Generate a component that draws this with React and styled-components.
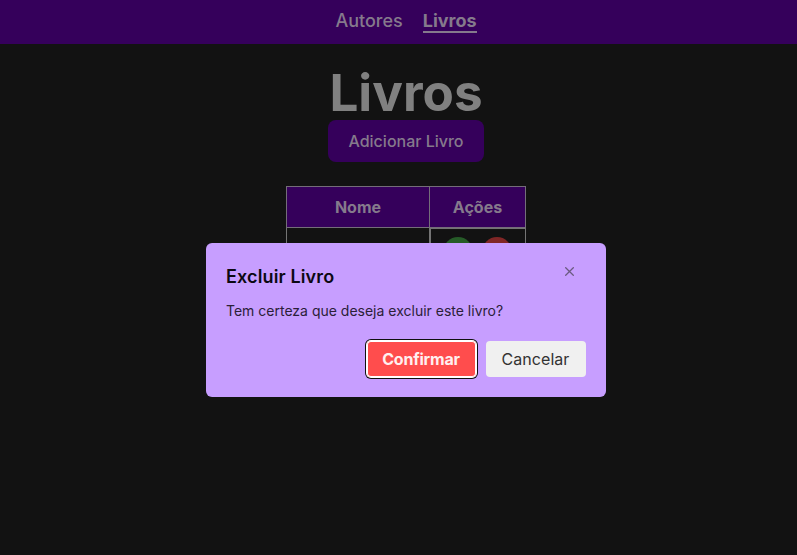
import React from 'react';
import styled, { createGlobalStyle } from 'styled-components';

const GlobalStyle = createGlobalStyle`
  *, *::before, *::after { box-sizing: border-box; }
  body {
    margin: 0;
    overflow: hidden;
    background: #121212;
    font-family: Inter, 'Liberation Sans', sans-serif;
  }
  button { font-family: inherit; border: 0; padding: 0; }
`;

const Page = styled.div`
  width: 812px;
  height: 555px;
  overflow: hidden;
  color: #808080;
`;

const NavBar = styled.nav`
  display: flex;
  justify-content: center;
  gap: 20px;
  height: 44px;
  padding-top: 9px;
  background: #35005b;
`;

const NavLink = styled.a`
  height: 24px;
  font-size: 18px;
  line-height: 24px;
  font-weight: ${({ $active }) => ($active ? 700 : 500)};
  color: #857a8c;
  border-bottom: ${({ $active }) => ($active ? '2px solid #857a8c' : '0')};
`;

const Content = styled.main`
  display: flex;
  flex-direction: column;
  align-items: center;
  padding-top: 26px;
`;

const Title = styled.h1`
  margin: 0;
  height: 50px;
  font-size: 51.2px;
  line-height: 44px;
  font-weight: 700;
`;

const AddButton = styled.button`
  width: 156px;
  height: 42px;
  border-radius: 8px;
  background: #35005b;
  color: #857a8c;
  font-size: 16px;
  font-weight: 500;
`;

const Table = styled.div`
  display: grid;
  grid-template-columns: 143px 97px;
  grid-template-rows: 42px 48px;
  width: 240px;
  margin-top: 24px;
`;

const HeadCell = styled.div`
  display: flex;
  align-items: center;
  justify-content: center;
  border: 1px solid #746d79;
  border-right-width: ${({ $last }) => ($last ? '1px' : '0')};
  background: #35005b;
  color: #857a8c;
  font-size: 16px;
  font-weight: 700;
`;

const BodyCell = styled.div`
  border: 1px solid #747474;
  border-top: 0;
  border-right: 0;
`;

const ActionsCell = styled.div`
  display: flex;
  justify-content: center;
  gap: 9px;
  padding: 8px 1px 0 0;
  border: 1px solid #747474;
  border-width: 1px 1px 1px 2px;
`;

const RoundButton = styled.button`
  width: 30px;
  height: 30px;
  border-radius: 50%;
  background: ${({ $color }) => $color};
`;

const Dialog = styled.section`
  position: absolute;
  left: 206px;
  top: 243px;
  display: flex;
  flex-direction: column;
  width: 400px;
  height: 154px;
  padding: 20px;
  border-radius: 6px;
  background: #c79eff;
  color: #0c0812;
`;

const DialogHeader = styled.header`
  display: flex;
  justify-content: space-between;
  height: 34px;
`;

const DialogTitle = styled.h2`
  margin: 0;
  font-size: 18px;
  line-height: 28px;
  font-weight: 600;
  letter-spacing: 0.13px;
`;

const CloseButton = styled.button`
  display: flex;
  margin: 4px 12px 0 0;
  width: 9px;
  height: 9px;
  background: transparent;
`;

const Message = styled.p`
  margin: 2px 0 0;
  height: 42px;
  font-size: 14px;
  line-height: 24px;
  color: #2b2038;
`;

const Actions = styled.footer`
  display: flex;
  justify-content: flex-end;
  gap: 10px;
`;

const ActionButton = styled.button`
  height: 36px;
  width: ${({ $danger }) => ($danger ? '109px' : '100px')};
  border-radius: 4px;
  padding-right: 1px;
  font-size: 16px;
  letter-spacing: ${({ $danger }) => ($danger ? '-0.2px' : '0.05px')};
  font-weight: ${({ $danger }) => ($danger ? 700 : 400)};
  color: ${({ $danger }) => ($danger ? '#fff0f0' : '#333333')};
  background: ${({ $danger }) => ($danger ? '#ff4d4d' : '#f0f0f0')};
  box-shadow: ${({ $danger }) =>
    $danger
      ? 'inset 0 0 0 1px #ffffff, 0 0 0 1px #ffffff, 0 0 0 2px #101010'
      : 'none'};
`;

export default function App() {
  return (
    <Page>
      <GlobalStyle />
      <NavBar>
        <NavLink>Autores</NavLink>
        <NavLink $active>Livros</NavLink>
      </NavBar>
      <Content>
        <Title>Livros</Title>
        <AddButton>Adicionar Livro</AddButton>
        <Table>
          <HeadCell>Nome</HeadCell>
          <HeadCell $last>Ações</HeadCell>
          <BodyCell />
          <ActionsCell>
            <RoundButton $color="#265b28" aria-label="Editar" />
            <RoundButton $color="#802626" aria-label="Excluir" />
          </ActionsCell>
        </Table>
      </Content>
      <Dialog role="dialog">
        <DialogHeader>
          <DialogTitle>Excluir Livro</DialogTitle>
          <CloseButton aria-label="Fechar">
            <svg width="9" height="9" viewBox="0 0 9 9" stroke="#6b5a80" strokeWidth="1.25">
              <path d="M0.3 0.3L8.7 8.7M8.7 0.3L0.3 8.7" />
            </svg>
          </CloseButton>
        </DialogHeader>
        <Message>Tem certeza que deseja excluir este livro?</Message>
        <Actions>
          <ActionButton $danger>Confirmar</ActionButton>
          <ActionButton>Cancelar</ActionButton>
        </Actions>
      </Dialog>
    </Page>
  );
}
